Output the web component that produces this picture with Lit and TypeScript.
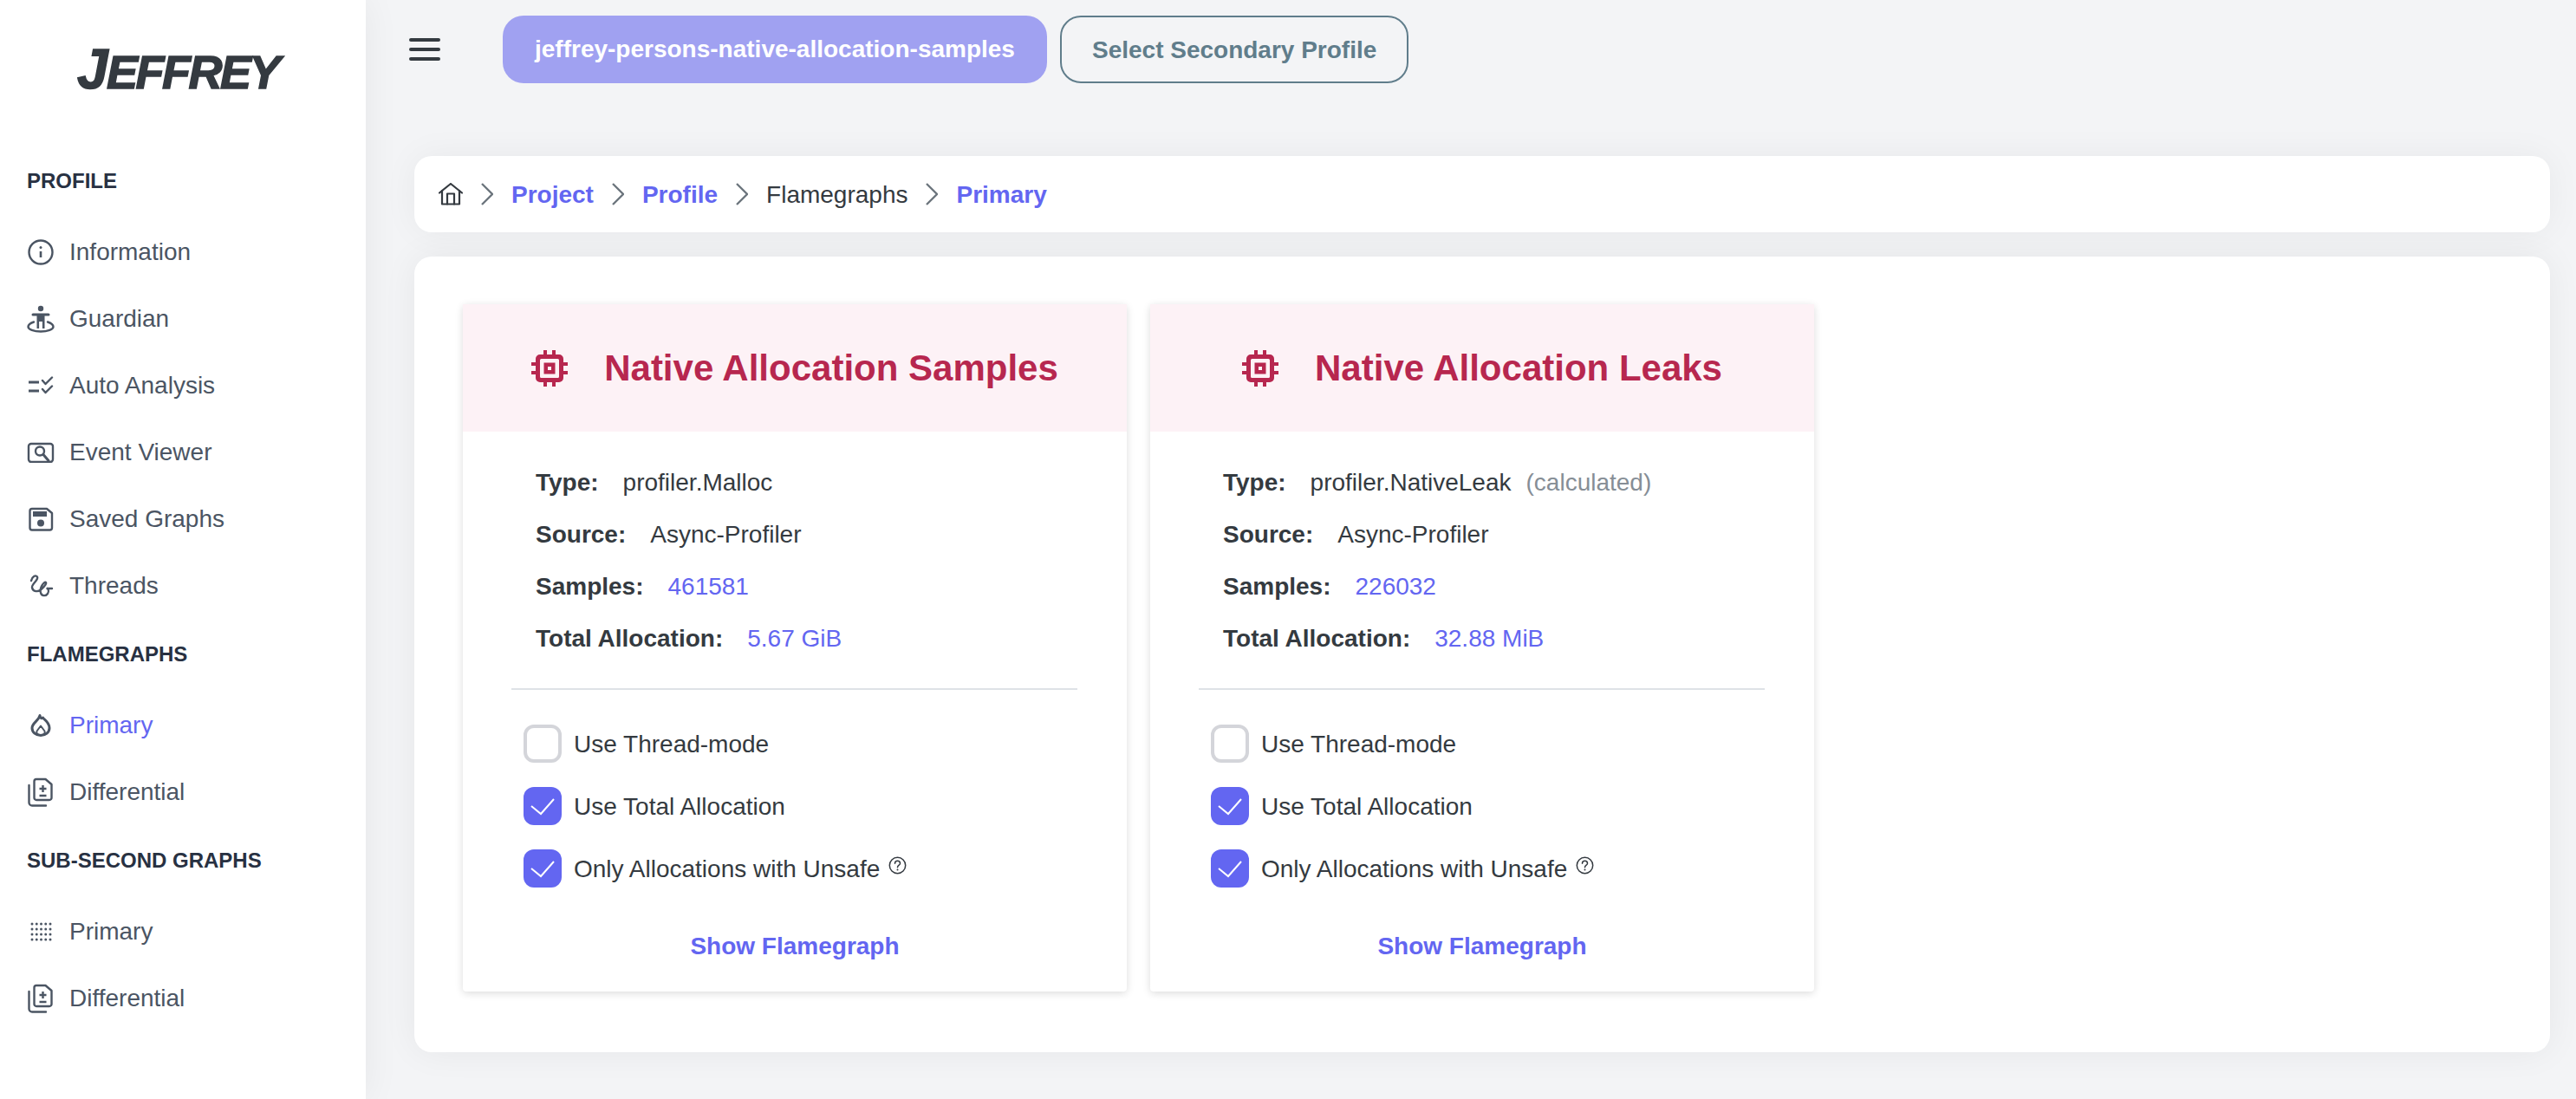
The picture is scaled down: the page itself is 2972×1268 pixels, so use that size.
import { LitElement, html, css } from 'lit';
import { customElement } from 'lit/decorators.js';

const ico = (w: number, h: number, body: unknown) => html`
  <svg width=${w} height=${h} viewBox="0 0 ${w} ${h}" fill="none" stroke="currentColor" stroke-width="2.4" stroke-linecap="round" stroke-linejoin="round">${body}</svg>
`;

const dotCells = [6, 11.25, 16.5, 21.75, 27].flatMap((x) => [3, 9, 15, 21].map((y) => ({ x, y })));

const icons: Record<string, unknown> = {
  info: ico(32, 32, html`
    <svg><circle cx="16" cy="16" r="13.5"></circle><path d="M16 15v7" stroke-width="2.6" stroke-linecap="butt"></path><circle cx="16" cy="10.5" r="1.5" fill="currentColor" stroke="none"></circle></svg>`),
  guardian: ico(32, 32, html`
    <svg><circle cx="16" cy="4" r="3.2" fill="currentColor" stroke="none"></circle>
    <path d="M7 11h18" stroke-width="3"></path>
    <path d="M11.5 11h9v16h-2.6v-8h-3.8v8h-2.6z" fill="currentColor" stroke="none"></path>
    <path d="M8 19.5C3.5 21 1.5 23 1.5 25c0 3 6.5 5.5 14.5 5.5S30.5 28 30.5 25c0-2-2-4-6.500-5.500"></path></svg>`),
  auto: ico(32, 22, html`
    <svg><path d="M2 7h12M2 17h12" stroke-width="3" stroke-linecap="butt"></path>
    <path d="M18 5l3.500 4L29 1.500M18 15l3.500 4L29 11.500"></path></svg>`),
  event: ico(32, 24, html`
    <svg><path d="M24 2H5a3 3 0 0 0-3 3v15a3 3 0 0 0 3 3h22a3 3 0 0 0 3-3V5a3 3 0 0 0-3-3z"></path>
    <circle cx="15" cy="10.500" r="5"></circle><path d="M19 14.500l6 7" stroke-width="3"></path></svg>`),
  saved: ico(32, 28, html`
    <svg><path d="M6 2h17l6 5v17a2.500 2.500 0 0 1-2.500 2.500h-20.500a2.500 2.500 0 0 1-2.500-2.500V4.500A2.500 2.500 0 0 1 6 2z"></path>
    <path d="M7 5h16v6H7z" fill="currentColor" stroke="none"></path>
    <circle cx="16" cy="18.500" r="4" fill="currentColor" stroke="none"></circle></svg>`),
  threads: ico(32, 28, html`
    <svg><path d="M5 8C6 3 10 1 12 3.500 14 7 5 12 6 16c1 5 7 5 10 2.500 3-2.500 7-7 6-8.500-2-2-8 7-6 12 1 4 6 4 8 1 1.500-2.500 1-5-.5-6M23.500 17h5.500"></path></svg>`),
  flame: ico(32, 28, html`
    <svg><path d="M15 2.500c.5 3 1.500 4 3.500 2.500 0 1.500 7.500 4.500 7.500 12 0 5-4.500 8.500-10 8.500S6 22 6 17C6 11 13.500 9 15 2.500z" stroke-width="3"></path>
    <path d="M16 14.500l4.500 6c1 2.500-1 4.500-4.500 4.500s-5.500-2-4.500-4.500z" stroke-width="2"></path></svg>`),
  diff: ico(32, 34, html`
    <svg><path d="M11 2h10.500l7 6v15.500a2.500 2.500 0 0 1-2.500 2.500H11a2.500 2.500 0 0 1-2.500-2.500v-19A2.500 2.500 0 0 1 11 2z"></path>
    <path d="M2.500 9v20a3.500 3.500 0 0 0 3.500 3.500h16" ></path>
    <path d="M18.500 9v8M14.500 13h8M14.500 21h8" stroke-width="2.400" stroke-linecap="butt"></path></svg>`),
  dots: ico(32, 24, html`
    <svg>${dotCells.map((d) => html`<svg><circle cx=${d.x} cy=${d.y} r="1.500" fill="currentColor" stroke="none"></circle></svg>`)}</svg>`),
};

const chip = html`
  <svg width="42" height="42" viewBox="0 0 42 42" fill="currentColor">
    <path fill-rule="evenodd" d="M14 0h4v5h6V0h4v5h4a5 5 0 0 1 5 5v4h5v4h-5v6h5v4h-5v4a5 5 0 0 1-5 5h-4v5h-4v-5h-6v5h-4v-5h-4a5 5 0 0 1-5-5v-4H0v-4h5v-6H0v-4h5v-4a5 5 0 0 1 5-5h4zM11.500 10a1.500 1.500 0 0 0-1.500 1.500v19a1.500 1.500 0 0 0 1.500 1.500h19a1.500 1.500 0 0 0 1.500-1.500v-19a1.500 1.500 0 0 0-1.500-1.500z"></path>
    <path fill-rule="evenodd" d="M14.500 14.500h13v13h-13zM19 19v4h4v-4z"></path>
  </svg>
`;

const home = html`
  <svg width="28" height="26" viewBox="0 0 28 26" fill="none" stroke="currentColor" stroke-width="2.200" stroke-linejoin="round" stroke-linecap="round">
    <path d="M1 11.500 14 1l13 10.500"></path>
    <path d="M4 9v15.500h20V9"></path>
    <path d="M10 24.500v-12h8v12"></path>
  </svg>
`;

const chevron = html`
  <svg class="chev" width="14" height="26" viewBox="0 0 14 26" fill="none" stroke="currentColor" stroke-width="2.400">
    <path d="M1 1l12 12L1 25"></path>
  </svg>
`;

const check = html`
  <svg width="44" height="44" viewBox="0 0 44 44" fill="none" stroke="#fff" stroke-width="2">
    <path d="M9 22l11 9 15-17"></path>
  </svg>
`;

const help = html`
  <svg class="help" width="21" height="21" viewBox="0 0 21 21" fill="none" stroke="currentColor" stroke-width="1.500" stroke-linecap="round">
    <circle cx="10.500" cy="10.500" r="9.200"></circle>
    <path d="M7.500 8.200c0-4 6-4 6 0 0 2-3 2-3 4.500"></path>
    <circle cx="10.500" cy="15.500" r="1" fill="currentColor" stroke="none"></circle>
  </svg>
`;

interface NavItem { label: string; icon: string; active?: boolean; }
interface NavSection { title: string; items: NavItem[]; }

const nav: NavSection[] = [
  {
    title: 'PROFILE',
    items: [
      { label: 'Information', icon: 'info' },
      { label: 'Guardian', icon: 'guardian' },
      { label: 'Auto Analysis', icon: 'auto' },
      { label: 'Event Viewer', icon: 'event' },
      { label: 'Saved Graphs', icon: 'saved' },
      { label: 'Threads', icon: 'threads' },
    ],
  },
  {
    title: 'FLAMEGRAPHS',
    items: [
      { label: 'Primary', icon: 'flame', active: true },
      { label: 'Differential', icon: 'diff' },
    ],
  },
  {
    title: 'SUB-SECOND GRAPHS',
    items: [
      { label: 'Primary', icon: 'dots' },
      { label: 'Differential', icon: 'diff' },
    ],
  },
];

const cards = [
  { title: 'Native Allocation Samples', type: 'profiler.Malloc', note: '', samples: '461581', total: '5.67 GiB' },
  { title: 'Native Allocation Leaks', type: 'profiler.NativeLeak', note: '(calculated)', samples: '226032', total: '32.88 MiB' },
];

@customElement('app-root')
export class AppRoot extends LitElement {
  static styles = css`
    :host {
      display: flex;
      min-height: 100vh;
      background: #f3f4f6;
      font-family: "Liberation Sans", Arial, sans-serif;
      font-size: 28px;
      color: #343a40;
    }
    .sidebar {
      width: 422px;
      flex: none;
      background: #fff;
      box-shadow: 0 0 40px rgba(0, 0, 0, 0.06);
      padding-left: 31px;
      box-sizing: border-box;
    }
    .logo {
      height: 188px;
      box-sizing: border-box;
      padding: 48px 0 0 58px;
      color: #343a40;
      font-weight: 700;
      font-style: italic;
      font-size: 54px;
      line-height: 64px;
      text-transform: uppercase;
      letter-spacing: -2.500px;
      -webkit-text-stroke: 1.500px #343a40;
    }
    .logo span {
      font-size: 64px;
      margin-right: 1px;
    }
    .heading {
      height: 40px;
      line-height: 40px;
      padding-top: 1px;
      font-size: 24px;
      font-weight: 700;
      color: #283142;
    }
    .section {
      margin-bottom: 20px;
    }
    .items {
      margin-top: 23px;
    }
    .item {
      height: 77px;
      display: flex;
      align-items: center;
      gap: 17px;
      color: #4b5563;
    }
    .item.active {
      color: #6366f1;
    }
    .item svg {
      flex: none;
      color: #4b5563;
    }
    main {
      flex: 1;
      min-width: 0;
      padding: 18px 30px 54px 56px;
    }
    .topbar {
      display: flex;
      align-items: center;
      height: 78px;
      margin-bottom: 84px;
    }
    .burger {
      width: 36px;
      margin: 0 72px 0 -6px;
      display: flex;
      flex-direction: column;
      gap: 7px;
    }
    .burger i {
      display: block;
      height: 4px;
      border-radius: 2px;
      background: #343a40;
    }
    .pill {
      height: 78px;
      box-sizing: border-box;
      display: flex;
      align-items: center;
      padding: 0 37px;
      border-radius: 24px;
      font-weight: 700;
    }
    .pill.primary {
      background: #a0a1f1;
      color: #fff;
      margin-right: 15px;
    }
    .pill.secondary {
      border: 2px solid #607d8b;
      color: #607d8b;
      padding: 2px 35px 0;
    }
    .crumbs {
      height: 88px;
      background: #fff;
      border-radius: 20px;
      display: flex;
      align-items: center;
      padding-left: 28px;
      gap: 21px;
      margin-bottom: 28px;
      box-shadow: 0 0 40px rgba(0, 0, 0, 0.05);
    }
    .crumbs a,
    .crumbs span {
      padding-top: 2px;
    }
    .crumbs a {
      color: #6366f1;
      font-weight: 700;
    }
    .chev {
      color: #6c757d;
    }
    .panel {
      background: #fff;
      border-radius: 20px;
      padding: 55px 56px 70px;
      box-shadow: 0 0 40px rgba(0, 0, 0, 0.06);
      display: grid;
      grid-template-columns: repeat(3, 1fr);
      gap: 27px;
    }
    .card {
      background: #fff;
      box-shadow: 0 2px 10px rgba(0, 0, 0, 0.14);
      border-radius: 4px;
    }
    .card-head {
      height: 147px;
      background: #fdf2f6;
      display: flex;
      align-items: center;
      justify-content: center;
      gap: 42px;
      color: #b7274f;
      font-size: 42px;
      font-weight: 700;
    }
    .facts {
      padding: 29px 84px 27px;
    }
    .fact {
      height: 60px;
      display: flex;
      align-items: center;
      gap: 28px;
    }
    .fact b {
      font-weight: 700;
    }
    .fact em {
      font-style: normal;
      color: #868e96;
      margin-left: -11px;
    }
    .fact .num {
      color: #6366f1;
    }
    hr {
      margin: 0 57px 0 56px;
      border: 0;
      border-top: 2px solid #dee2e6;
    }
    .checks {
      padding: 40px 70px 0;
      display: flex;
      flex-direction: column;
      gap: 28px;
    }
    .check {
      display: flex;
      align-items: center;
      gap: 14px;
      height: 44px;
    }
    .check label {
      padding-top: 2px;
    }
    .box {
      width: 44px;
      height: 44px;
      box-sizing: border-box;
      border-radius: 12px;
      border: 4px solid #d4d5da;
      flex: none;
    }
    .box.on {
      border: 0;
      background: #6366f1;
    }
    .help {
      margin: -7px 0 0 -4px;
    }
    .show {
      margin-top: 48px;
      padding-bottom: 32px;
      line-height: 40px;
      text-align: center;
      font-weight: 700;
      color: #6366f1;
    }
  `;

  private renderCard(c: (typeof cards)[number]) {
    return html`
      <section class="card">
        <div class="card-head">${chip}<span>${c.title}</span></div>
        <div class="facts">
          <div class="fact"><b>Type:</b><span>${c.type}</span>${c.note ? html`<em>${c.note}</em>` : ''}</div>
          <div class="fact"><b>Source:</b><span>Async-Profiler</span></div>
          <div class="fact"><b>Samples:</b><span class="num">${c.samples}</span></div>
          <div class="fact"><b>Total Allocation:</b><span class="num">${c.total}</span></div>
        </div>
        <hr />
        <div class="checks">
          <div class="check"><span class="box"></span><label>Use Thread-mode</label></div>
          <div class="check"><span class="box on">${check}</span><label>Use Total Allocation</label></div>
          <div class="check"><span class="box on">${check}</span><label>Only Allocations with Unsafe</label>${help}</div>
        </div>
        <div class="show">Show Flamegraph</div>
      </section>
    `;
  }

  render() {
    return html`
      <aside class="sidebar">
        <div class="logo"><span>J</span>effrey</div>
        ${nav.map((s) => html`
          <div class="section">
            <div class="heading">${s.title}</div>
            <div class="items">
              ${s.items.map((i) => html`
                <div class="item ${i.active ? 'active' : ''}">${icons[i.icon]}<span>${i.label}</span></div>
              `)}
            </div>
          </div>
        `)}
      </aside>
      <main>
        <div class="topbar">
          <div class="burger"><i></i><i></i><i></i></div>
          <div class="pill primary">jeffrey-persons-native-allocation-samples</div>
          <div class="pill secondary">Select Secondary Profile</div>
        </div>
        <nav class="crumbs">
          ${home}${chevron}<a>Project</a>${chevron}<a>Profile</a>${chevron}<span>Flamegraphs</span>${chevron}<a>Primary</a>
        </nav>
        <div class="panel">
          ${cards.map((c) => this.renderCard(c))}
        </div>
      </main>
    `;
  }
}
